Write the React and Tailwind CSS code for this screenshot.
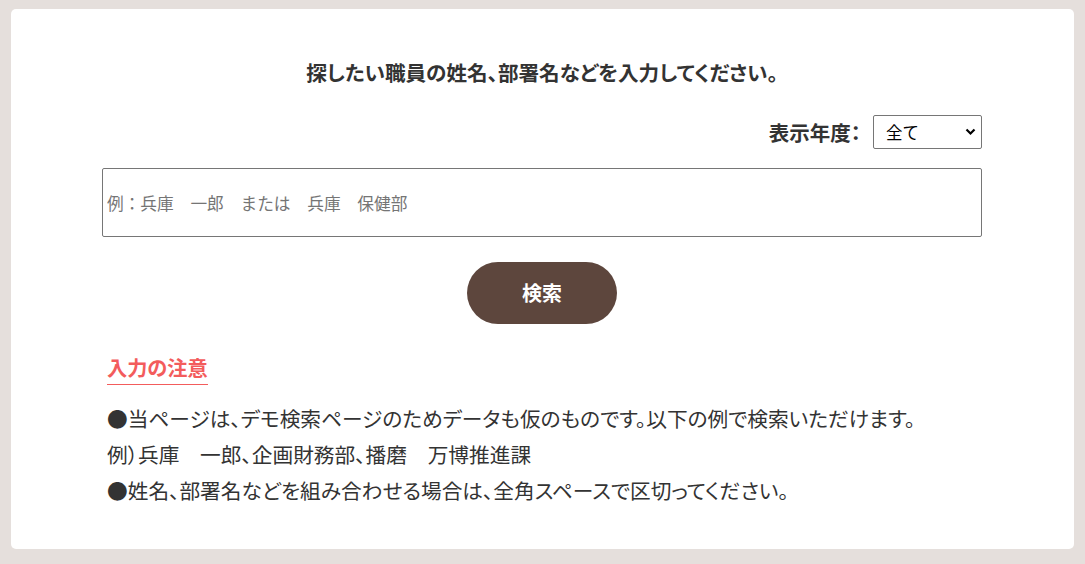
const FONT = { fontFamily: '"Noto Sans CJK JP", "Noto Sans", sans-serif' };

export default function App() {
  return (
    <div className="min-h-screen bg-[#e5dfdc] px-[11px] pt-[9px] pb-[15px]" style={FONT}>
      <div className="bg-white rounded-[5px] h-[540px] pt-[47px]">
        <div className="w-[880px] ml-[91px] text-[#333]">
          <h2 className="text-center text-[20.6px] font-bold leading-[32px] [font-feature-settings:'palt']">
            探したい職員の姓名、部署名などを入力してください。
          </h2>

          <div className="flex justify-end items-center mt-[27px] gap-[12px]">
            <label className="text-[20.5px] font-bold leading-[34px] [font-feature-settings:'palt']">表示年度：</label>
            <div className="relative">
              <select className="appearance-none w-[109px] h-[34px] border border-[#767676] rounded-[2px] pl-[12px] pr-[24px] text-[16.5px] text-black bg-white">
                <option>全て</option>
                <option>2024年度</option>
                <option>2023年度</option>
              </select>
              <svg className="absolute right-[6px] top-[13px] pointer-events-none" width="11" height="8" viewBox="0 0 11 8">
                <path d="M1.5 1.5 L5.5 5.5 L9.5 1.5" fill="none" stroke="#000" strokeWidth="2.2" />
              </svg>
            </div>
          </div>

          <input
            type="text"
            placeholder="例：兵庫　一郎　または　兵庫　保健部"
            className="block w-full h-[69px] mt-[19px] border border-[#767676] rounded-[2px] px-[4px] text-[16.7px] placeholder:text-[#757575]"
          />

          <div className="flex justify-center mt-[25px]">
            <button className="w-[150px] h-[62px] rounded-full bg-[#5d463d] text-white text-[20px] font-bold">
              検索
            </button>
          </div>

          <div className="mt-[30px] px-[5px]">
            <h3 className="inline-block text-[20.2px] font-bold text-[#f35c5c] border-b border-[#f35c5c] pb-[2px] leading-[28px] [font-feature-settings:'palt']">
              入力の注意
            </h3>
            <div className="mt-[15px] text-[20.7px] leading-[36px] [font-feature-settings:'palt']">
              <p>●当ページは、デモ検索ページのためデータも仮のものです。以下の例で検索いただけます。</p>
              <p>例）兵庫　一郎、企画財務部、播磨　万博推進課</p>
              <p>●姓名、部署名などを組み合わせる場合は、全角スペースで区切ってください。</p>
            </div>
          </div>
        </div>
      </div>
    </div>
  );
}
